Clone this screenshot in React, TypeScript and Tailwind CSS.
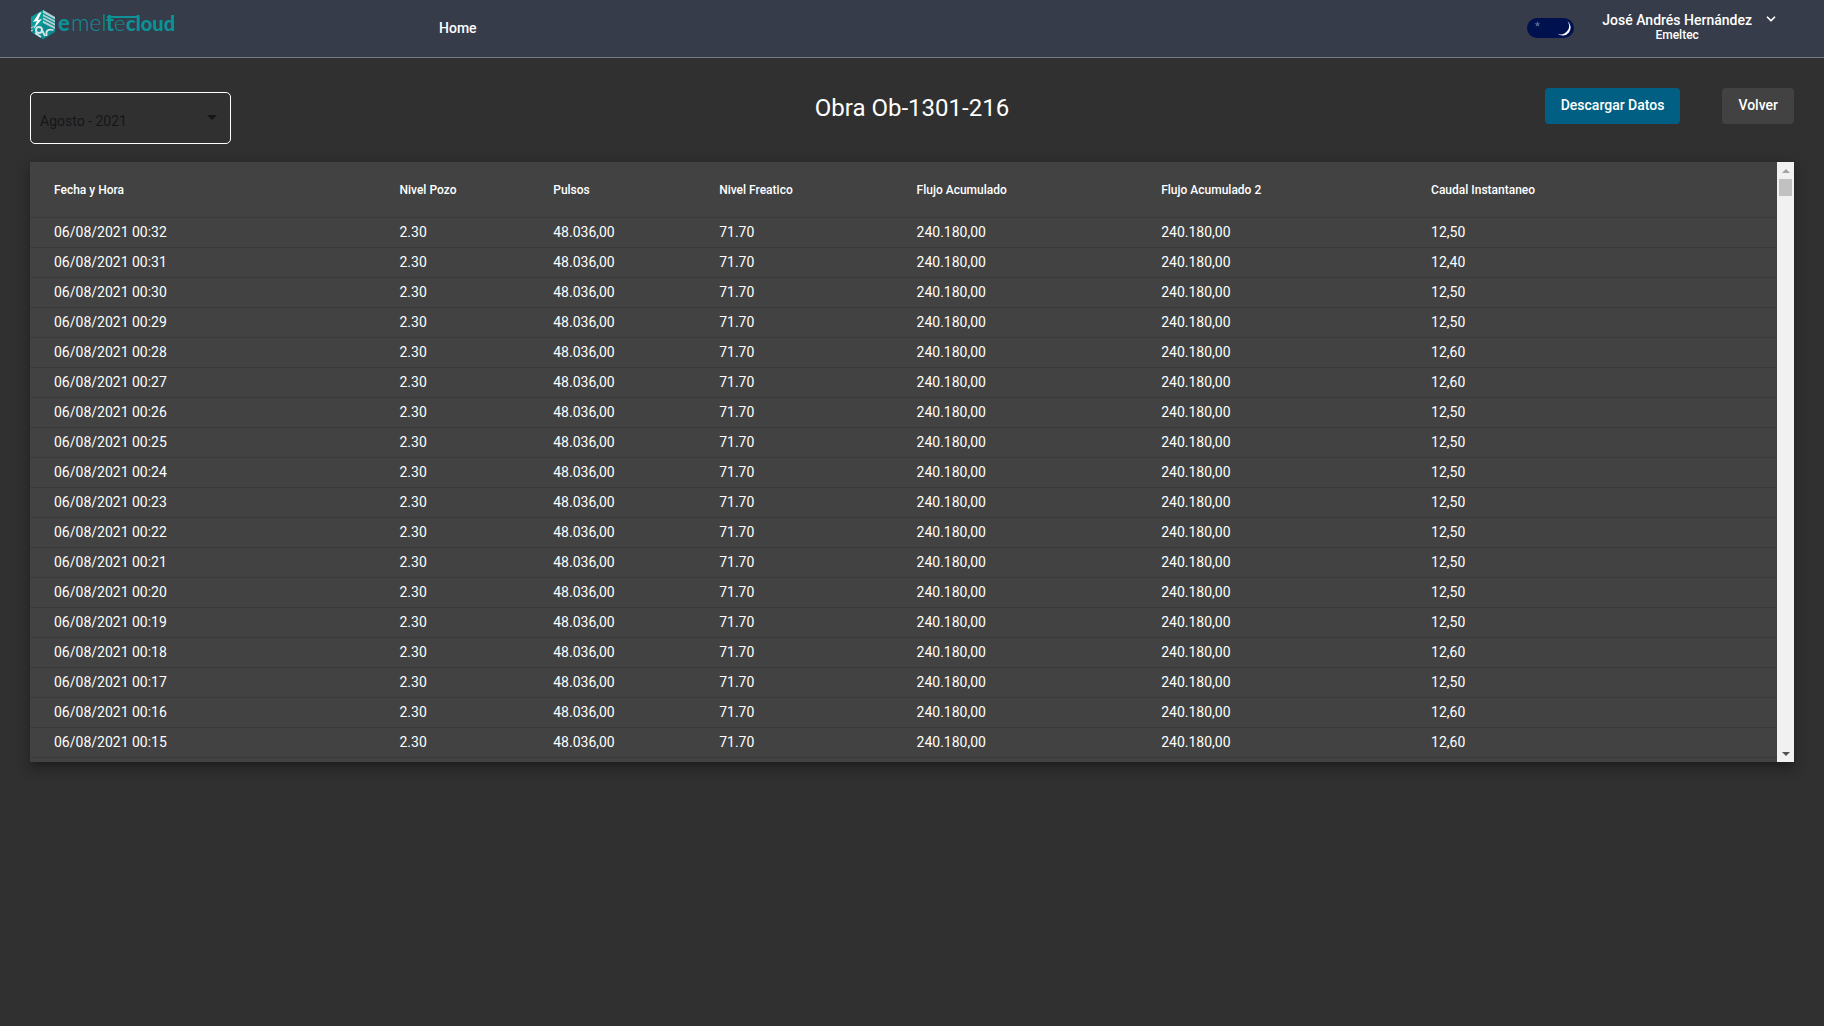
import React, { useRef, useState } from 'react';
import { ChevronDown } from 'lucide-react';

const columns = [
  { label: 'Fecha y Hora', width: 'w-[21.15%]' },
  { label: 'Nivel Pozo', width: 'w-[8.8%]' },
  { label: 'Pulsos', width: 'w-[9.5%]' },
  { label: 'Nivel Freatico', width: 'w-[11.3%]' },
  { label: 'Flujo Acumulado', width: 'w-[14%]' },
  { label: 'Flujo Acumulado 2', width: 'w-[15.45%]' },
  { label: 'Caudal Instantaneo', width: '' },
];

// One reading per minute, newest first
const caudales = [
  '12,50', '12,40', '12,50', '12,50', '12,60', '12,60', '12,50', '12,50', '12,50',
  '12,50', '12,50', '12,50', '12,50', '12,50', '12,60', '12,50', '12,60', '12,60',
];

const rows = caudales.map((caudal, i) => [
  `06/08/2021 00:${32 - i}`,
  '2.30',
  '48.036,00',
  '71.70',
  '240.180,00',
  '240.180,00',
  caudal,
]);

const Logo: React.FC = () => (
  <svg width="148" height="36" viewBox="0 0 148 36" role="img" aria-label="emeltecloud">
    {/* Cube */}
    <path d="M13 2 L25 9 V24 L13 31.500 L1 24 V9 Z" fill="#0b8b8f" />
    <path d="M13 2 L1 9 V24 L13 16 Z" fill="#0c9a9a" />
    <path d="M13 2 L25 9 V21 L13 15 Z" fill="#b9cfd3" />
    <path d="M13 5.500 L25 12 M13 8.700 L25 15 M13 12 L25 18.200" stroke="#0c8f92" strokeWidth="1.200" />
    <path d="M9 5 L3 14 L7 13 L3.500 21 L12 11 L8 12 L11.500 4 Z" fill="#ffffff" />
    <path d="M1 20 L5 18 M1 23 L3 22" stroke="#c9dcdf" strokeWidth="1" />
    <circle cx="9" cy="22" r="3" fill="none" stroke="#d3e6e8" strokeWidth="2" />
    <path d="M12 22 L15 28 M16.500 28 V24 Q17.500 20.500 23.500 22 M5 25 L11 29" fill="none" stroke="#d3e6e8" strokeWidth="1.800" />
    {/* Wordmark */}
    <g fontFamily="Lato, sans-serif" fill="#0c9296">
      <text y="23">
        <tspan x="28" fontSize="22" fontWeight="900">e</tspan>
        <tspan x="41" fontSize="23" fontWeight="300">mel</tspan>
        <tspan x="76" fontSize="22" fontWeight="700">t</tspan>
        <tspan x="84" fontSize="22" fontWeight="300">e</tspan>
        <tspan x="96" fontSize="20" fontWeight="900">cloud</tspan>
      </text>
    </g>
    <path d="M78 7 H81 V13 H78 Z M77 8 H107 V10 H77 Z" fill="#0c9296" />
  </svg>
);

const ThemeSwitch: React.FC = () => (
  <label className="relative block h-5 w-12 cursor-pointer">
    <input type="checkbox" defaultChecked aria-label="Modo oscuro" className="absolute inset-0 opacity-0" />
    <svg width="48" height="20" viewBox="0 0 48 20" aria-hidden="true">
      <rect width="47" height="20" rx="10" fill="#00114f" />
      <path d="M10.500 3 L11.300 5.200 H13.500 L11.800 6.500 L12.400 8.800 L10.500 7.500 L8.600 8.800 L9.200 6.500 L7.500 5.200 H9.700 Z" fill="#5a6390" />
      <path d="M40.500 3 A8 8 0 1 1 30.500 15.800 A8.500 8.500 0 0 0 40.500 3 Z" fill="#ffffff" />
    </svg>
  </label>
);

const Navbar: React.FC = () => (
  <header className="flex h-[58px] border-b border-[#777986] bg-[#363c4a] px-[30px]">
    <a href="#" className="w-[409px] pt-2">
      <Logo />
    </a>
    <nav className="flex-1 pt-4">
      <a href="#" className="text-sm leading-5 font-medium">Home</a>
    </nav>
    <div className="flex items-start gap-[27px] pr-4">
      <div className="pt-[18px]">
        <ThemeSwitch />
      </div>
      <button type="button" className="flex items-start gap-3 pt-3 text-center font-medium">
        <span>
          <span className="block text-sm leading-4">José Andrés Hernández</span>
          <span className="block text-xs leading-[14px]">Emeltec</span>
        </span>
        <ChevronDown size={14} strokeWidth={3} />
      </button>
    </div>
  </header>
);

const DataTable: React.FC = () => {
  const scroller = useRef<HTMLDivElement>(null);
  const [progress, setProgress] = useState(0);

  const handleScroll = () => {
    const el = scroller.current;
    if (!el) return;
    const max = el.scrollHeight - el.clientHeight;
    setProgress(max > 0 ? el.scrollTop / max : 0);
  };

  const scrollRows = (count: number) => scroller.current?.scrollBy({ top: count * 30 });

  return (
    <div className="flex h-[600px] bg-[#424242] shadow-[0_5px_5px_-3px_rgba(0,0,0,0.2),0_8px_10px_1px_rgba(0,0,0,0.14),0_3px_14px_2px_rgba(0,0,0,0.12)]">
      <div ref={scroller} onScroll={handleScroll} className="flex-1 overflow-auto [scrollbar-width:none]">
        <table className="w-full min-w-[900px] table-fixed border-separate border-spacing-0 text-left">
          <thead>
            <tr className="h-14">
              {columns.map((col, i) => (
                <th
                  key={col.label}
                  className={`sticky top-0 border-b border-[#3a3a3a] bg-[#424242] p-0 text-xs font-medium ${i === 0 ? 'pl-6' : ''} ${col.width}`}
                >
                  {col.label}
                </th>
              ))}
            </tr>
          </thead>
          <tbody>
            {rows.map((row) => (
              <tr key={row[0]} className="h-[30px]">
                {row.map((value, i) => (
                  <td key={i} className={`border-b border-[#3a3a3a] p-0 pb-0.5 text-sm ${i === 0 ? 'pl-6' : ''}`}>
                    {value}
                  </td>
                ))}
              </tr>
            ))}
          </tbody>
        </table>
      </div>

      {/* Scroll rail */}
      <div className="flex w-[17px] flex-col bg-[#f1f1f1]">
        <button type="button" aria-label="Subir" onClick={() => scrollRows(-1)} className="flex h-[17px] items-center justify-center">
          <svg width="8" height="4" viewBox="0 0 8 4"><path d="M0 4 L4 0 L8 4 Z" fill="#a3a3a3" /></svg>
        </button>
        <div className="flex flex-1 flex-col px-0.5">
          <div style={{ flexGrow: progress }} />
          <div className="h-[17px] bg-[#c1c1c1]" />
          <div style={{ flexGrow: 1 - progress }} />
        </div>
        <button type="button" aria-label="Bajar" onClick={() => scrollRows(1)} className="flex h-[17px] items-center justify-center">
          <svg width="8" height="4" viewBox="0 0 8 4"><path d="M0 0 L4 4 L8 0 Z" fill="#505050" /></svg>
        </button>
      </div>
    </div>
  );
};

const App: React.FC = () => (
  <div className="min-h-screen bg-[#303030] font-['Roboto',sans-serif] text-white">
    <Navbar />
    <main className="px-[30px] pt-[30px]">
      <div className="mb-[18px] grid grid-cols-3 items-start">
        <div className="relative mt-1 w-[201px]">
          <select
            aria-label="Mes"
            defaultValue="2021-08"
            className="h-[52px] w-full appearance-none rounded-[5px] border border-white bg-transparent px-[9px] pt-1.5 text-sm text-[#161616]"
          >
            <option value="2021-08">Agosto - 2021</option>
          </select>
          <svg width="10" height="5" viewBox="0 0 10 5" className="pointer-events-none absolute top-[23px] right-3.5">
            <path d="M0 0 H10 L5 5 Z" fill="#161616" />
          </svg>
        </div>
        <h1 className="pt-1 text-center text-2xl leading-8">Obra Ob-1301-216</h1>
        <div className="flex justify-end gap-[42px] text-sm font-medium">
          <button type="button" className="h-9 rounded bg-[#005f83] px-4 pb-0.5">Descargar Datos</button>
          <button type="button" className="h-9 rounded bg-[#424242] px-4 pb-0.5">Volver</button>
        </div>
      </div>
      <DataTable />
    </main>
  </div>
);

export default App;
